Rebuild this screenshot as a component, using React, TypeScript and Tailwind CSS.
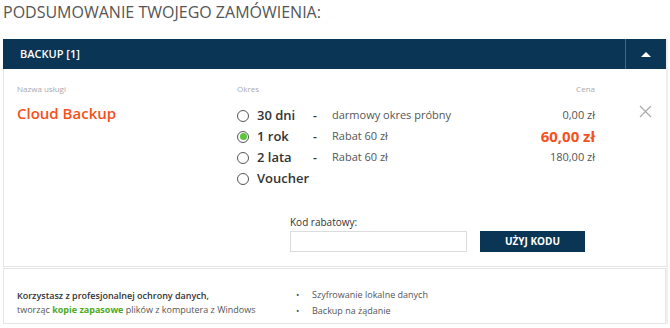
type Period = {
  label: string;
  desc?: string;
  price?: string;
  selected?: boolean;
};

const periods: Period[] = [
  { label: '30 dni', desc: 'darmowy okres próbny', price: '0,00 zł' },
  { label: '1 rok', desc: 'Rabat 60 zł', price: '60,00 zł', selected: true },
  { label: '2 lata', desc: 'Rabat 60 zł', price: '180,00 zł' },
  { label: 'Voucher' },
];

function Radio({ checked }: { checked?: boolean }) {
  return (
    <span className="w-[12px] h-[12px] rounded-full border border-[#555] bg-white flex items-center justify-center">
      {checked && <span className="w-[7px] h-[7px] rounded-full bg-[#5cc43a]" />}
    </span>
  );
}

function PeriodRow({ p }: { p: Period }) {
  return (
    <div className="flex items-center h-[21px]">
      <div className="w-[20px] flex items-center">
        <Radio checked={p.selected} />
      </div>
      <span className="w-[56px] text-[13px] font-semibold text-[#333]">{p.label}</span>
      {p.desc && (
        <>
          <span className="w-[19px] text-[12px] font-semibold text-[#333]">-</span>
          <span className="flex-1 text-[11px] text-[#555]">{p.desc}</span>
          <span
            className={
              p.selected
                ? 'text-[15px] font-bold text-[#f4511e]'
                : 'text-[11px] text-[#555]'
            }
          >
            {p.price}
          </span>
        </>
      )}
    </div>
  );
}

export default function App() {
  return (
    <div className="w-[670px] h-[328px] bg-white overflow-hidden font-['Open_Sans',sans-serif]">
      <h2 className="pl-[3px] pt-[2px] h-[39px] text-[16px] leading-[20px] text-[#555]">
        PODSUMOWANIE TWOJEGO ZAMÓWIENIA:
      </h2>

      <div className="ml-[3px] w-[665px] border-r-[2px] border-[#efefef]">
        <div className="flex h-[30px] bg-[#0b3554]">
          <div className="flex-1 flex items-center pl-[17px] text-[11px] font-semibold text-white">
            BACKUP [1]
          </div>
          <div className="w-[41px] border-l border-[#4d6479] flex items-center justify-center">
            <span className="w-0 h-0 border-l-[5px] border-r-[5px] border-b-[5px] border-l-transparent border-r-transparent border-b-white" />
          </div>
        </div>

        <div className="h-[198px] border-l border-b border-[#e6e6e6] flex pt-[13px]">
          <div className="w-[233px] pl-[13px]">
            <div className="text-[8px] leading-[14px] text-[#aaa]">Nazwa usługi</div>
            <div className="mt-[6px] text-[15px] leading-[22px] font-semibold text-[#f4511e]">
              Cloud Backup
            </div>
          </div>

          <div className="w-[358px] flex flex-col">
            <div className="flex justify-between text-[8px] leading-[14px] text-[#aaa]">
              <span>Okres</span>
              <span>Cena</span>
            </div>
            <div className="mt-[9px]">
              {periods.map((p) => (
                <PeriodRow key={p.label} p={p} />
              ))}
            </div>

            <div className="mt-[26px] ml-[53px] flex items-end gap-[13px]">
              <div className="flex flex-col">
                <span className="text-[10px] leading-[14px] text-[#333] mb-[2px]">Kod rabatowy:</span>
                <div className="w-[177px] h-[21px] border border-[#dcdcdc] bg-white" />
              </div>
              <button className="w-[105px] h-[21px] bg-[#0b3554] text-white text-[10px] font-bold">
                UŻYJ KODU
              </button>
            </div>
          </div>

          <div className="flex-1 pl-[44px] pt-[23px]">
            <svg width="13" height="13" viewBox="0 0 13 13" className="text-[#aaa]">
              <path d="M1 1L12 12M12 1L1 12" stroke="currentColor" strokeWidth="1.2" fill="none" />
            </svg>
          </div>
        </div>

        <div className="mt-[1px] h-[56px] border border-[#e6e6e6] flex items-center pt-[14px]">
          <div className="w-[292px] pl-[13px] text-[9px] leading-[14px] whitespace-nowrap">
            <div className="font-semibold text-[#333]">Korzystasz z profesjonalnej ochrony danych,</div>
            <div className="text-[#555]">
              tworząc <span className="font-bold text-[#4caa1e]">kopie zapasowe</span> plików z komputera z Windows
            </div>
          </div>
          <ul className="text-[9px] leading-[16px] text-[#555]">
            <li className="flex items-center">
              <span className="w-[16px]">•</span>Szyfrowanie lokalne danych
            </li>
            <li className="flex items-center">
              <span className="w-[16px]">•</span>Backup na żądanie
            </li>
          </ul>
        </div>
      </div>
    </div>
  );
}
